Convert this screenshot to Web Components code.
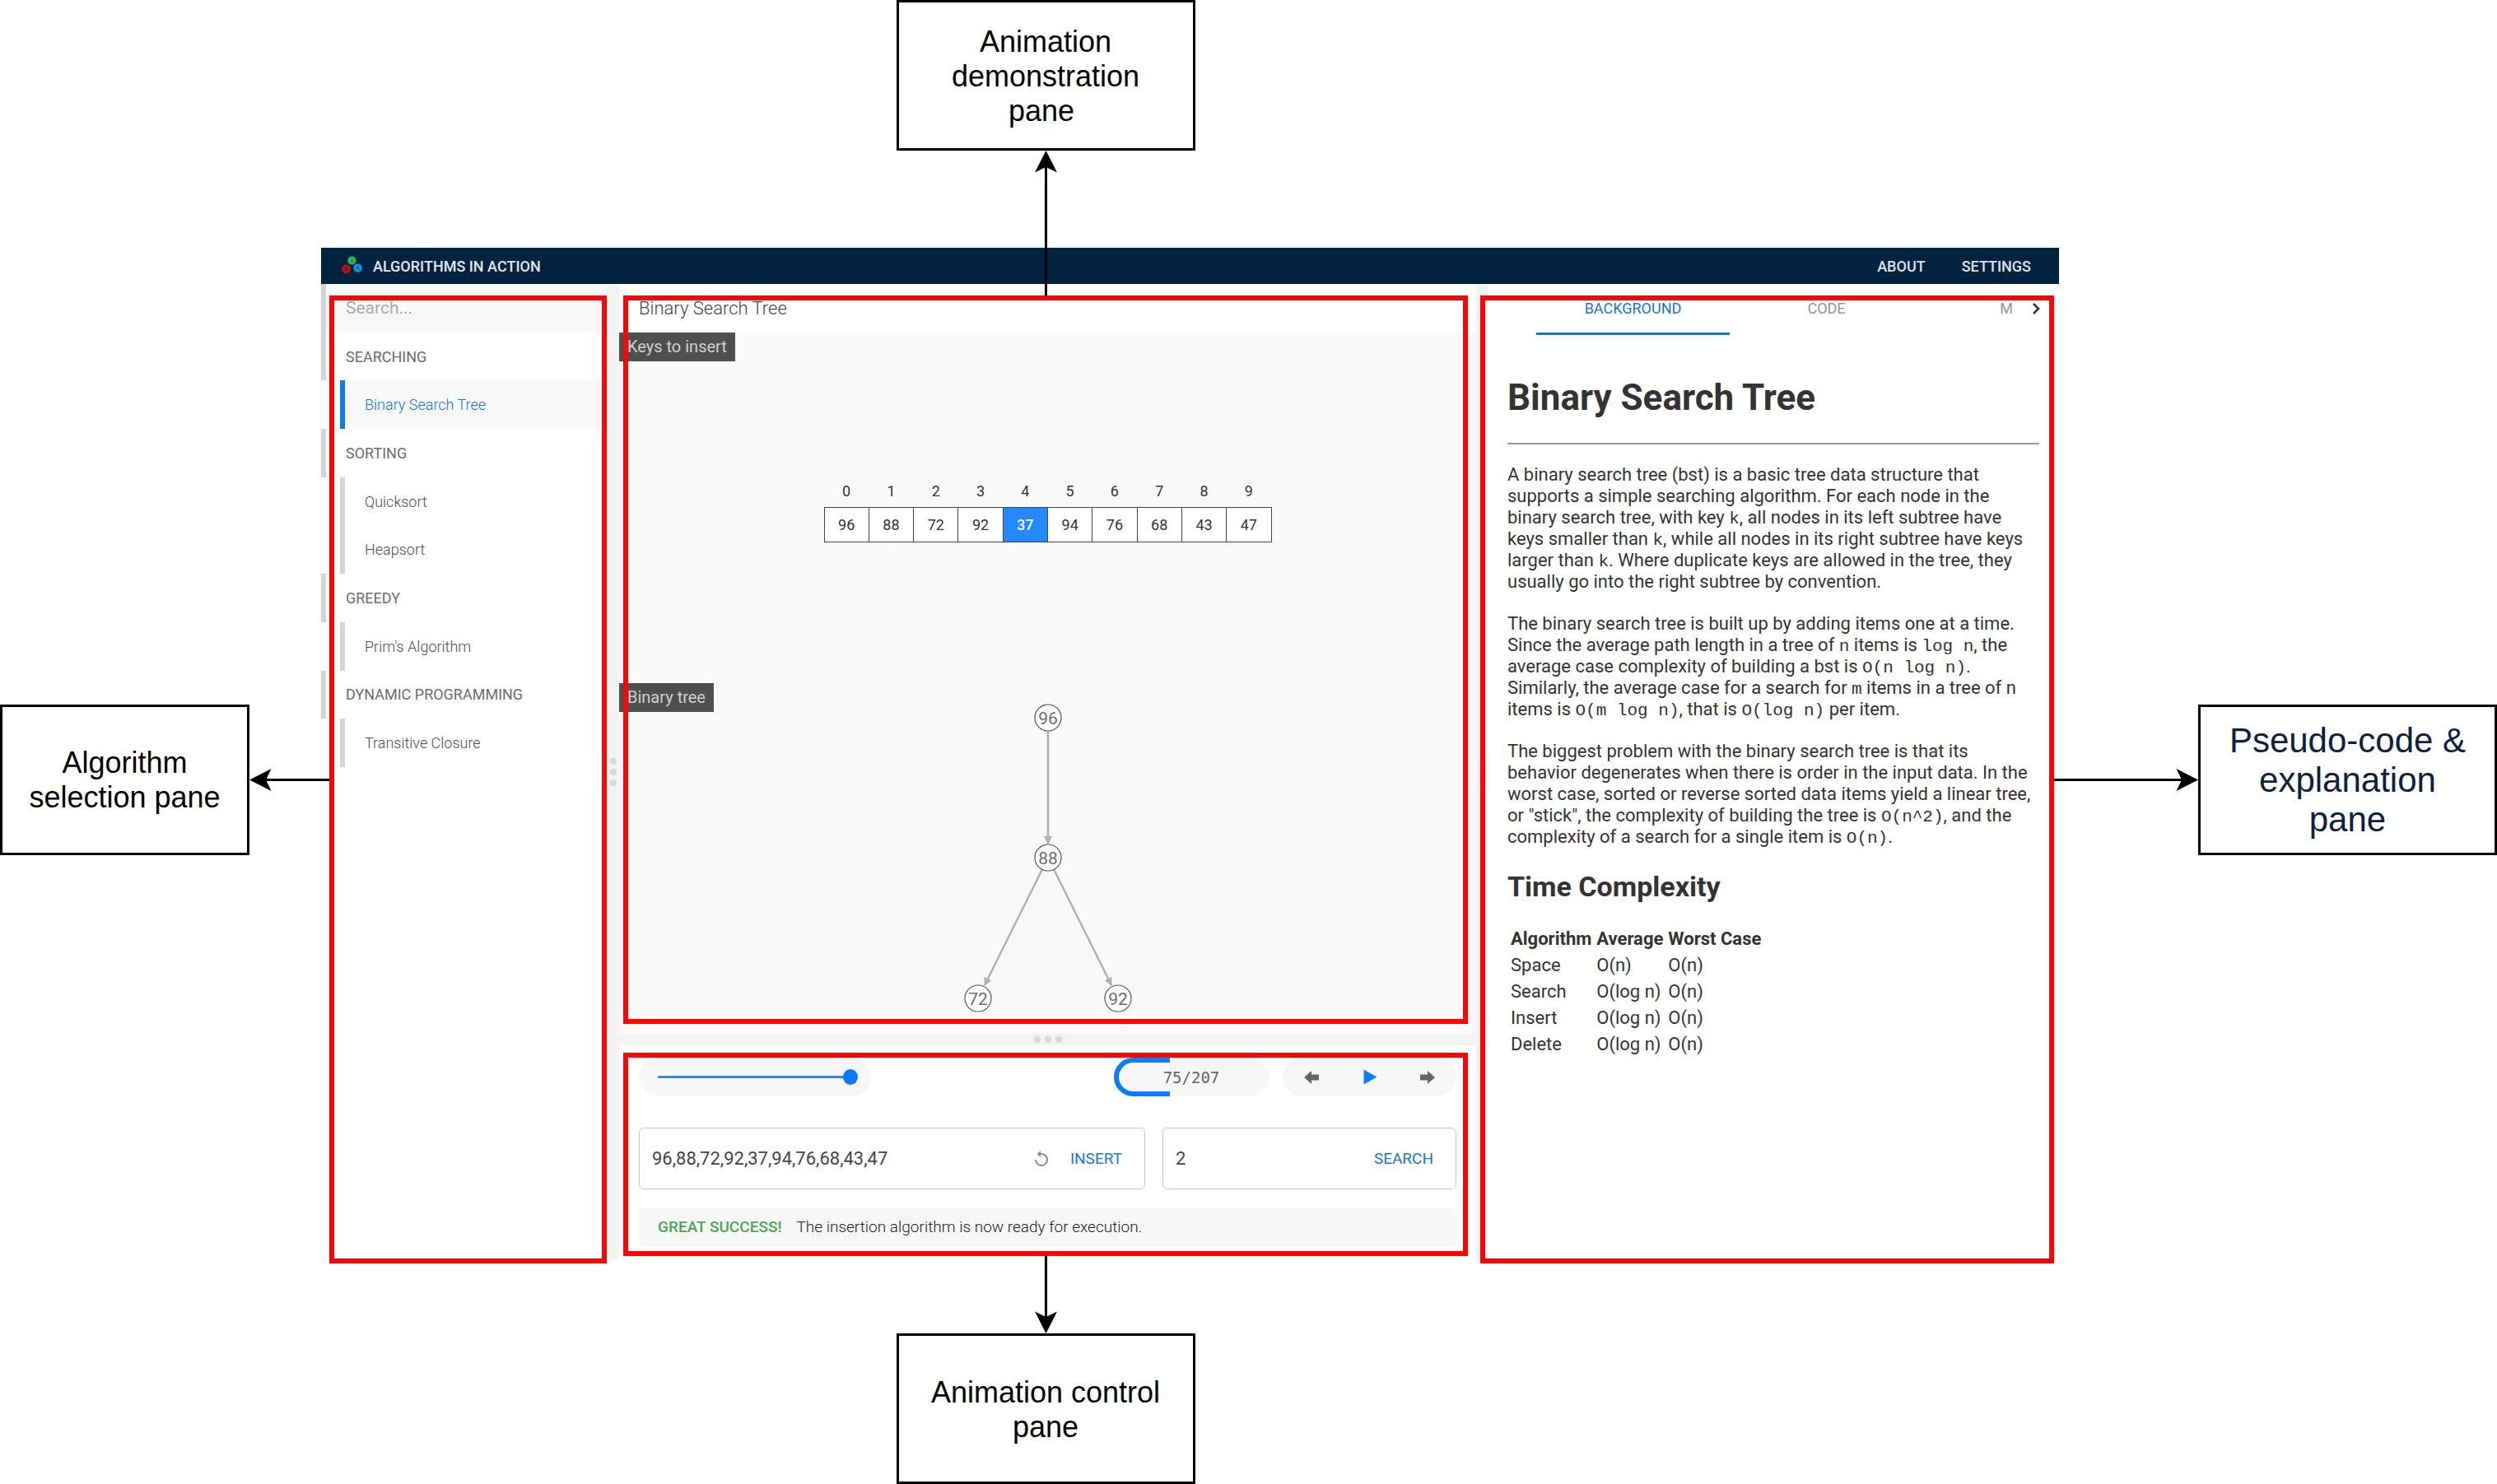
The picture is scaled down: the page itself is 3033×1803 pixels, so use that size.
<!DOCTYPE html>
<html lang="en">
<head>
<meta charset="utf-8">
<title>Algorithms in Action</title>
<style>
  html, body { margin: 0; }
  body {
    background: #fff;
    font-family: Roboto, "Liberation Sans", sans-serif;
    color: #333;
  }
  guided-tour { min-height: 100vh; }
</style>
</head>
<body>
<guided-tour></guided-tour>

<script>
  const define = (name, html, setup) => {
    const template = document.createElement('template');
    template.innerHTML = html;
    customElements.define(name, class extends HTMLElement {
      connectedCallback() {
        if (this.shadowRoot) return;
        this.attachShadow({ mode: 'open' }).append(template.content.cloneNode(true));
        if (setup) setup(this, this.shadowRoot);
      }
    });
  };

  /* Boxed caption */
  define('callout-box', `
    <style>
      :host {
        display: flex; align-items: center; justify-content: center; box-sizing: border-box;
        width: 363px; height: 183px; border: 3px solid #000; background: #fff; color: #000;
        padding-top: 2px;
        font: 36px/42px "Liberation Sans", Arial, sans-serif; text-align: center;
      }
      :host([large]) { font-size: 42px; line-height: 48px; color: #0c2044; }
      p { margin: 0; }
    </style>
    <p><slot></slot></p>`);

  /* Connector with an arrow head; it fills its grid area */
  define('connector-arrow', `
    <style>
      :host { display: flex; align-items: center; z-index: 3; pointer-events: none; }
      :host([to="up"]) { flex-direction: column; }
      :host([to="down"]) { flex-direction: column-reverse; }
      :host([to="right"]) { flex-direction: row-reverse; }
      svg { flex: none; width: 27px; height: 27px; }
      i { flex: 1; background: #000; }
      :host([to="up"]) i { width: 3px; margin-top: -8px; }
      :host([to="down"]) i { width: 3px; margin-bottom: -8px; }
      :host([to="left"]) i { height: 3px; margin-left: -8px; }
      :host([to="right"]) i { height: 3px; margin-right: -8px; }
      :host([to="down"]) svg { rotate: 180deg; }
      :host([to="left"]) svg { rotate: -90deg; }
      :host([to="right"]) svg { rotate: 90deg; }
    </style>
    <svg viewBox="0 0 27 27" aria-hidden="true"><path d="M13.500 0 L27 26.500 L13.500 20 L0 26.500 Z"/></svg><i></i>`);

  define('highlight-frame', `
    <style>:host { display: block; box-sizing: border-box; border: 6px solid #f90606; z-index: 2; pointer-events: none; }</style>`);

  define('pane-splitter', `
    <style>
      :host { display: flex; flex: none; align-items: center; justify-content: center; gap: 5px; background: #f3f3f3; }
      :host([vertical]) { flex-direction: column; width: 15px; }
      :host([horizontal]) { height: 14px; }
      i { width: 8px; height: 8px; border-radius: 50%; background: #d8d8d8; }
    </style>
    <i></i><i></i><i></i>`);

  define('app-header', `
    <style>
      :host { display: flex; align-items: center; height: 44px; padding: 0 34px 0 24px; background: #01233f; }
      svg { width: 28px; height: 26px; margin-right: 11px; }
      h1 { flex: 1; margin: 0; font-size: 18px; font-weight: 500; color: #e4e8ec; }
      nav { display: flex; gap: 44px; }
      a { font-size: 18px; font-weight: 500; color: #dfe4e9; text-decoration: none; }
    </style>
    <svg viewBox="0 0 28 26" aria-hidden="true">
      <circle cx="13.500" cy="6.500" r="5.800" fill="#0b5a3c"/><circle cx="13.500" cy="6.500" r="4.800" fill="#2fb457"/>
      <path d="M13.500 4.500v4" stroke="#0d5a33" stroke-width="1.300"/>
      <circle cx="6.500" cy="17" r="6" fill="#5f1426"/><circle cx="6.500" cy="17" r="5" fill="#ad1c22"/>
      <path d="M4.800 19l1.700-4 1.700 4" stroke="#550c14" stroke-width="1.200" fill="none"/>
      <circle cx="20.500" cy="15.500" r="5.800" fill="#0b5688"/><circle cx="20.500" cy="15.500" r="4.800" fill="#149be4"/>
      <path d="M18.800 17.500l1.700-4 1.700 4" stroke="#084a78" stroke-width="1.200" fill="none"/>
    </svg>
    <h1>ALGORITHMS IN ACTION</h1>
    <nav><a href="#about">ABOUT</a><a href="#settings">SETTINGS</a></nav>`);

  define('algorithm-list', `
    <style>
      :host { display: block; width: 347px; flex: none; background: #fff; }
      nav { display: grid; grid-template-rows: repeat(10, 1fr); height: 587px; }
      label, h2, a { display: flex; align-items: center; box-sizing: border-box; margin: 0; padding-left: 24px; border-left: 6px solid #d4d4d4; }
      label { background: #f8f8f8; }
      input { flex: 1; min-width: 0; border: 0; padding: 0; background: none; outline: 0; font: 400 21px Roboto, sans-serif; color: #333; }
      input::placeholder { color: #a9a9a9; opacity: 1; }
      h2 { font-size: 18px; font-weight: 400; color: #6c6c6c; }
      a { margin-left: 23px; font-size: 18px; font-weight: 300; color: #4c4c4c; text-decoration: none; }
      a[aria-current] { border-color: #0f7af5; background: #f8f8f8; color: #1273dc; }
    </style>
    <nav>
      <label><input type="search" placeholder="Search..." aria-label="Search algorithms"></label>
      <h2>SEARCHING</h2>
      <a href="#bst" aria-current="page">Binary Search Tree</a>
      <h2>SORTING</h2>
      <a href="#quicksort">Quicksort</a>
      <a href="#heapsort">Heapsort</a>
      <h2>GREEDY</h2>
      <a href="#prim">Prim's Algorithm</a>
      <h2>DYNAMIC PROGRAMMING</h2>
      <a href="#closure">Transitive Closure</a>
    </nav>`);

  /* Panel of the animation, with its caption in the corner */
  define('visual-panel', `
    <style>
      :host { position: relative; display: flex; flex: 1; align-items: center; justify-content: center; min-height: 0; }
      :host([top]) { align-items: flex-start; }
      h3 { position: absolute; top: 0; left: 0; margin: 0; padding: 0 10px; background: #4f4f4f; color: #cfcfcf; font-size: 20px; line-height: 35px; font-weight: 400; }
    </style>
    <h3></h3><slot></slot>`,
    (host, root) => { root.querySelector('h3').textContent = host.getAttribute('caption'); });

  define('array-view', `
    <style>
      :host { display: block; }
      table { width: 544px; table-layout: fixed; border-collapse: collapse; text-align: center; font-size: 18px; line-height: 20px; color: #333; }
      th { height: 38px; padding: 2px 0 0; font-weight: 400; }
      td { height: 40px; padding: 1px 0 0; border: 1px solid #444; background: #fff; }
      .current { background: #2489ff; color: #fff; font-weight: 500; }
    </style>
    <table><thead><tr></tr></thead><tbody><tr></tr></tbody></table>`,
    (host, root) => {
      const [head, body] = root.querySelectorAll('tr');
      host.getAttribute('values').split(',').forEach((value, i) => {
        const th = document.createElement('th');
        th.textContent = i;
        head.append(th);
        const td = body.insertCell();
        td.textContent = value;
        if (i === +host.getAttribute('current')) td.className = 'current';
      });
    });

  define('tree-view', `
    <style>
      :host { display: block; }
      svg { display: block; width: 240px; height: 426px; overflow: visible; }
      line { stroke: #b0b0b0; stroke-width: 2.500; }
      marker path { fill: #b0b0b0; }
      circle { fill: #fff; stroke: #555; stroke-width: 1.200; }
      text { font: 400 21px Roboto, sans-serif; fill: #6c6c6c; text-anchor: middle; }
    </style>
    <svg viewBox="-120 0 240 426">
      <defs><marker id="head" viewBox="0 0 10 10" refX="9" refY="5" markerWidth="10" markerHeight="10" markerUnits="userSpaceOnUse" orient="auto"><path d="M0 0 L10 5 L0 10 Z"/></marker></defs>
      <line x1="0" y1="42" x2="0" y2="195" marker-end="url(#head)"/>
      <line x1="0" y1="212" x2="-77" y2="367" marker-end="url(#head)"/>
      <line x1="0" y1="212" x2="77" y2="367" marker-end="url(#head)"/>
      <circle cx="0" cy="42" r="16"/><text x="0" y="50">96</text>
      <circle cx="0" cy="212" r="16"/><text x="0" y="220">88</text>
      <circle cx="-85" cy="383" r="16"/><text x="-85" y="391">72</text>
      <circle cx="85" cy="383" r="16"/><text x="85" y="391">92</text>
    </svg>`);

  define('animation-pane', `
    <style>
      :host { display: flex; flex: 1; flex-direction: column; min-height: 0; background: #f9f9f9; }
      h2 { margin: 0; padding: 0 24px; background: #fff; font-size: 22px; line-height: 59px; font-weight: 300; color: #444; }
    </style>
    <h2>Binary Search Tree</h2>
    <visual-panel caption="Keys to insert"><array-view values="96,88,72,92,37,94,76,68,43,47" current="4"></array-view></visual-panel>
    <visual-panel caption="Binary tree" top><tree-view></tree-view></visual-panel>`);

  /* Boxed text field with its action */
  define('action-field', `
    <style>
      :host { display: flex; box-sizing: border-box; height: 75px; border: 1px solid #c8c8c8; border-radius: 6px; background: #fff; }
      form { display: flex; flex: 1; align-items: center; min-width: 0; padding: 0 27px 0 15px; }
      input { flex: 1; min-width: 0; border: 0; padding: 0; outline: 0; background: none; font: 400 22px Roboto, sans-serif; color: #444; }
      button { border: 0; padding: 0; background: none; font: 400 19px Roboto, sans-serif; color: #1976d2; }
      .reset { display: none; margin-right: 25px; }
      :host([resettable]) .reset { display: block; }
      svg { display: block; width: 20px; height: 22px; }
    </style>
    <form>
      <input type="text">
      <button class="reset" type="button" aria-label="Reset"><svg viewBox="0 0 20 22"><path d="M8 5.300 A7 7 0 1 1 3 12" fill="none" stroke="#8c8c8c" stroke-width="2"/><path d="M4.500 5 L9 1 V9 Z" fill="#8c8c8c"/></svg></button>
      <button class="go" type="submit"></button>
    </form>`,
    (host, root) => {
      const input = root.querySelector('input');
      input.value = host.getAttribute('value');
      input.setAttribute('aria-label', host.getAttribute('label'));
      root.querySelector('.go').textContent = host.getAttribute('action');
    });

  define('control-pane', `
    <style>
      :host { display: flex; flex-direction: column; padding: 15px 24px 16px; background: #fff; }
      .row { display: flex; }
      .pill { display: flex; align-items: center; box-sizing: border-box; height: 47px; border-radius: 24px; background: #f6f6f6; }
      .speed { width: 282px; padding: 0 16px 0 23px; margin-right: auto; }
      input { -webkit-appearance: none; appearance: none; width: 100%; height: 19px; margin: 0; background: none; }
      input::-webkit-slider-runnable-track { height: 3px; border-radius: 2px; background: #3587e6; }
      input::-webkit-slider-thumb { -webkit-appearance: none; width: 18px; height: 19px; margin-top: -8px; border-radius: 50%; background: #0879fb; }
      .progress { position: relative; justify-content: center; width: 188px; font: 19px "DejaVu Sans Mono", monospace; color: #666; }
      .progress::before { content: ""; position: absolute; inset: 0 auto 0 0; width: 36%; box-sizing: border-box; border: 6px solid #0d7cf9; border-right: 0; border-radius: 24px 0 0 24px; }
      .steps { width: 211px; margin-left: 17px; padding: 0 25px; justify-content: space-between; }
      button { border: 0; padding: 0; background: none; }
      svg { display: block; width: 20px; height: 20px; }
      .fields { gap: 21px; margin: 38px 0 23px; }
      action-field { width: 357px; }
      action-field[resettable] { flex: 1; width: auto; }
      p { display: flex; gap: 18px; margin: 0; padding: 0 23px; border-radius: 6px; background: #f6f6f6; font-size: 19px; line-height: 46px; font-weight: 300; color: #222; }
      strong { font-weight: 500; color: #4ca750; }
    </style>
    <div class="row">
      <div class="pill speed"><input type="range" min="0" max="100" value="100" aria-label="Speed"></div>
      <div class="pill progress" role="status">75/207</div>
      <div class="pill steps">
        <button aria-label="Step back"><svg viewBox="0 0 20 20" fill="#666"><path d="M1 10 L10 2 V6.500 H19 V13.500 H10 V18 Z"/></svg></button>
        <button aria-label="Play"><svg viewBox="0 0 20 20" fill="#0d7cf9"><path d="M2.500 0.500 L18.500 9.500 L2.500 18.500 Z"/></svg></button>
        <button aria-label="Step forward"><svg viewBox="0 0 20 20" fill="#666"><path d="M19 10 L10 2 V6.500 H1 V13.500 H10 V18 Z"/></svg></button>
      </div>
    </div>
    <div class="row fields">
      <action-field resettable label="Keys to insert" value="96,88,72,92,37,94,76,68,43,47" action="INSERT"></action-field>
      <action-field label="Key to search" value="2" action="SEARCH"></action-field>
    </div>
    <p><strong>GREAT SUCCESS!</strong><span>The insertion algorithm is now ready for execution.</span></p>`);

  define('explanation-pane', `
    <style>
      :host { display: block; flex: none; width: 693px; background: #fff; }
      nav { display: flex; height: 62px; padding-left: 58px; }
      nav button { box-sizing: border-box; width: 235px; border: 0; border-bottom: 3px solid transparent; padding: 0; background: none; font: 400 18px Roboto, sans-serif; color: #949494; }
      nav button[aria-selected="true"] { border-color: #1976d2; color: #1976d2; }
      nav .cut { flex: 1; text-align: right; }
      nav .more { width: 56px; }
      svg { display: block; width: 12px; height: 16px; margin: auto; fill: none; stroke: #333; stroke-width: 2.500; }
      article { padding: 50px 24px 0 23px; font-size: 22px; line-height: 26px; }
      h1 { margin: 0 0 29px; font-size: 44px; line-height: 52px; font-weight: 700; }
      hr { margin: 0 0 24px; border: 0; border-top: 2px solid #999; }
      p { margin: 0 0 25px; }
      code { font-family: "Liberation Mono", "Courier New", monospace; font-size: 21px; line-height: 20px; }
      h2 { margin: 27px 0; font-size: 34px; line-height: 40px; font-weight: 700; }
      table { border-spacing: 2px; margin: 0; }
      th, td { height: 28px; padding: 1px 2px; text-align: left; }
    </style>
    <nav role="tablist">
      <button role="tab" aria-selected="true">BACKGROUND</button>
      <button role="tab" aria-selected="false">CODE</button>
      <button role="tab" aria-selected="false" class="cut">M</button>
      <button class="more" aria-label="More tabs"><svg viewBox="0 0 12 16"><path d="M3 2 L9 8 L3 14"/></svg></button>
    </nav>
    <article>
      <h1>Binary Search Tree</h1>
      <hr>
      <p>A binary search tree (bst) is a basic tree data structure that supports a simple searching algorithm. For each node in the binary search tree, with key <code>k</code>, all nodes in its left subtree have keys smaller than <code>k</code>, while all nodes in its right subtree have keys larger than <code>k</code>. Where duplicate keys are allowed in the tree, they usually go into the right subtree by convention.</p>
      <p>The binary search tree is built up by adding items one at a time. Since the average path length in a tree of <code>n</code> items is <code>log n</code>, the average case complexity of building a bst is <code>O(n log n)</code>. Similarly, the average case for a search for <code>m</code> items in a tree of n items is <code>O(m log n)</code>, that is <code>O(log n)</code> per item.</p>
      <p>The biggest problem with the binary search tree is that its behavior degenerates when there is order in the input data. In the worst case, sorted or reverse sorted data items yield a linear tree, or "stick", the complexity of building the tree is <code>O(n^2)</code>, and the complexity of a search for a single item is <code>O(n)</code>.</p>
      <h2>Time Complexity</h2>
      <table>
        <thead><tr><th>Algorithm</th><th>Average</th><th>Worst Case</th></tr></thead>
        <tbody>
          <tr><td>Space</td><td>O(n)</td><td>O(n)</td></tr>
          <tr><td>Search</td><td>O(log n)</td><td>O(n)</td></tr>
          <tr><td>Insert</td><td>O(log n)</td><td>O(n)</td></tr>
          <tr><td>Delete</td><td>O(log n)</td><td>O(n)</td></tr>
        </tbody>
      </table>
    </article>`);

  define('algorithms-app', `
    <style>
      :host { display: flex; flex-direction: column; min-width: 0; }
      main { display: flex; flex: 1; }
      section { display: flex; flex: 1; flex-direction: column; min-width: 0; }
    </style>
    <app-header></app-header>
    <main>
      <algorithm-list></algorithm-list>
      <pane-splitter vertical></pane-splitter>
      <section>
        <animation-pane></animation-pane>
        <pane-splitter horizontal></pane-splitter>
        <control-pane></control-pane>
      </section>
      <pane-splitter vertical></pane-splitter>
      <explanation-pane></explanation-pane>
    </main>`);

  /* The app with its captions round it; the frames share the grid lines of the connectors */
  define('guided-tour', `
    <style>
      :host {
        display: grid;
        grid-template-columns: 303px 87px 10px 337px 20px 1fr 15px 697px 6px 169px 363px;
        grid-template-rows: 183px 118px 58px 1fr 35px 247px 4px 5px 85px 183px;
      }
      /* grid-area: row start / column start / row end / column end */
      algorithms-app { grid-area: 3 / 3 / 8 / 10; }
      callout-box { align-self: center; }
      callout-box, .vertical { justify-self: center; }
      .top { grid-area: 1 / 6 / 2 / 7; }
      .bottom { grid-area: 10 / 6 / 11 / 7; }
      .left { grid-area: 4 / 1 / 9 / 2; width: 303px; }
      .right { grid-area: 4 / 11 / 9 / 12; }
      .f-list { grid-area: 4 / 4 / 9 / 5; }
      .f-demo { grid-area: 4 / 6 / 5 / 7; }
      .f-control { grid-area: 6 / 6 / 7 / 7; }
      .f-text { grid-area: 4 / 8 / 9 / 9; }
      .a-up { grid-area: 2 / 6 / 4 / 7; }
      .a-down { grid-area: 7 / 6 / 10 / 7; }
      .a-left { grid-area: 4 / 2 / 9 / 4; }
      .a-right { grid-area: 4 / 9 / 9 / 11; }
    </style>
    <callout-box class="top">Animation<br>demonstration<br>pane&nbsp;</callout-box>
    <callout-box class="left">Algorithm<br>selection pane</callout-box>
    <algorithms-app></algorithms-app>
    <callout-box class="right" large>Pseudo-code &amp;<br>explanation<br>pane</callout-box>
    <callout-box class="bottom">Animation control<br>pane</callout-box>
    <highlight-frame class="f-list"></highlight-frame>
    <highlight-frame class="f-demo"></highlight-frame>
    <highlight-frame class="f-control"></highlight-frame>
    <highlight-frame class="f-text"></highlight-frame>
    <connector-arrow class="a-up vertical" to="up"></connector-arrow>
    <connector-arrow class="a-down vertical" to="down"></connector-arrow>
    <connector-arrow class="a-left" to="left"></connector-arrow>
    <connector-arrow class="a-right" to="right"></connector-arrow>`);
</script>
</body>
</html>
